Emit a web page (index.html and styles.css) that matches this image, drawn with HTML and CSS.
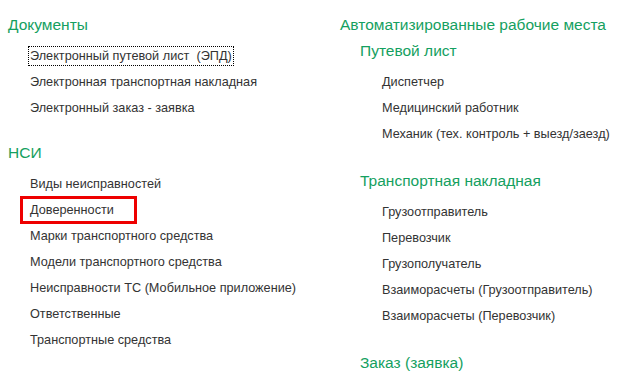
FILE: index.html
```html
<!DOCTYPE html>
<html lang="ru">
<head>
    <meta charset="UTF-8">
    <meta name="viewport" content="width=device-width, initial-scale=1.0">
    <title>Функции</title>
    <link rel="stylesheet" href="styles.css">
</head>
<body>
    <div class="panel">
        <div class="column left-column">
            <div class="section">
                <h2 class="section-title">Документы</h2>
                <ul class="links">
                    <li><a href="#" class="link focused">Электронный путевой лист&nbsp; (ЭПД)</a></li>
                    <li><a href="#" class="link">Электронная транспортная накладная</a></li>
                    <li><a href="#" class="link">Электронный заказ - заявка</a></li>
                </ul>
            </div>
            <div class="section">
                <h2 class="section-title">НСИ</h2>
                <ul class="links">
                    <li><a href="#" class="link">Виды неисправностей</a></li>
                    <li><a href="#" class="link marked">Доверенности</a></li>
                    <li><a href="#" class="link">Марки транспортного средства</a></li>
                    <li><a href="#" class="link">Модели транспортного средства</a></li>
                    <li><a href="#" class="link">Неисправности ТС (Мобильное приложение)</a></li>
                    <li><a href="#" class="link">Ответственные</a></li>
                    <li><a href="#" class="link">Транспортные средства</a></li>
                </ul>
            </div>
        </div>
        <div class="column right-column">
            <h2 class="section-title">Автоматизированные рабочие места</h2>
            <div class="subsection">
                <h3 class="subsection-title">Путевой лист</h3>
                <ul class="links">
                    <li><a href="#" class="link">Диспетчер</a></li>
                    <li><a href="#" class="link">Медицинский работник</a></li>
                    <li><a href="#" class="link">Механик (тех. контроль + выезд/заезд)</a></li>
                </ul>
            </div>
            <div class="subsection">
                <h3 class="subsection-title">Транспортная накладная</h3>
                <ul class="links">
                    <li><a href="#" class="link">Грузоотправитель</a></li>
                    <li><a href="#" class="link">Перевозчик</a></li>
                    <li><a href="#" class="link">Грузополучатель</a></li>
                    <li><a href="#" class="link">Взаиморасчеты (Грузоотправитель)</a></li>
                    <li><a href="#" class="link">Взаиморасчеты (Перевозчик)</a></li>
                </ul>
            </div>
            <div class="subsection last">
                <h3 class="subsection-title">Заказ (заявка)</h3>
            </div>
        </div>
    </div>
</body>
</html>
```

FILE: styles.css
```css
body {
    margin: 0;
    font-family: "Liberation Sans", Arial, sans-serif;
    color: #333333;
    background-color: #ffffff;
    overflow: hidden;
}
.panel {
    display: flex;
    padding: 15px 0 0 8px;
}
.left-column {
    width: 332px;
}
.right-column {
    flex: 1;
}
.section {
    margin-bottom: 22px;
}
.section:last-child {
    margin-bottom: 0;
}
.section-title,
.subsection-title {
    margin: 0;
    font-size: 15.5px;
    font-weight: normal;
    line-height: 20px;
    color: #14a060;
}
.section-title {
    margin-bottom: 8px;
}
.right-column .section-title {
    margin-bottom: 6px;
}
.subsection {
    margin-left: 20px;
    margin-bottom: 24px;
}
.subsection.last {
    margin-top: 2px;
    margin-bottom: 0;
}
.subsection.last .subsection-title {
    margin-bottom: 0;
}
.subsection-title {
    margin-bottom: 8px;
}
.links {
    list-style: none;
    margin: 0;
    padding: 0 0 0 20px;
}
.links li {
    line-height: 26px;
    font-size: 12.7px;
}
.link {
    color: #333333;
    text-decoration: none;
    padding: 2px 1px;
    border: 1px dotted transparent;
}
.link.focused {
    border-color: #000000;
}
.link.marked {
    position: relative;
}
.link.marked::after {
    content: "";
    position: absolute;
    left: -9px;
    right: -22px;
    top: -5px;
    bottom: -5px;
    border: 3px solid #ee0000;
}
```
